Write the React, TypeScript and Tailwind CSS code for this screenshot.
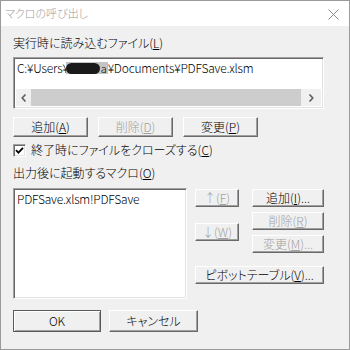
import * as React from "react";

const font = "font-['Noto_Sans_CJK_JP',sans-serif] [font-feature-settings:'palt'] font-light";

function U({ children }: { children: React.ReactNode }) {
  return <span className="underline underline-offset-[1px]">{children}</span>;
}

function Btn({
  children,
  w,
  h = "h-[18px]",
  disabled,
  isDefault,
  className = "",
}: {
  children: React.ReactNode;
  w: string;
  h?: string;
  disabled?: boolean;
  isDefault?: boolean;
  className?: string;
}) {
  const edge = isDefault
    ? "border border-[#5a5a5a] shadow-[inset_1px_1px_0_#ffffff,inset_-1px_-1px_0_#a0a0a0]"
    : "border border-t-white border-l-white border-r-[#696969] border-b-[#696969] shadow-[inset_-1px_-1px_0_#a0a0a0]";
  return (
    <div
      className={`${w} ${h} ${edge} bg-[#f0f0f0] flex items-center justify-center text-[12px] leading-none ${
        disabled ? "text-[#a0a0a0]" : "text-black"
      } ${className}`}
    >
      {children}
    </div>
  );
}

function Sunken({ className = "", children }: { className?: string; children?: React.ReactNode }) {
  return (
    <div
      className={`bg-white border border-t-[#a0a0a0] border-l-[#a0a0a0] border-r-white border-b-white shadow-[inset_1px_1px_0_#696969,inset_-1px_-1px_0_#e3e3e3] ${className}`}
    >
      {children}
    </div>
  );
}

export default function App() {
  return (
    <div className={`w-[350px] h-[350px] bg-[#f0f0f0] border border-[#9a9a9a] flex flex-col ${font}`}>
      {/* title bar */}
      <div className="h-[25px] bg-white flex items-center justify-between pl-[4px] pr-[10px]">
        <span className="text-[11px] text-[#9c9c9c]">マクロの呼び出し</span>
        <svg width="11" height="11" viewBox="0 0 11 11" className="mt-[1px]">
          <path d="M0.5 0.5 L10.5 10.5 M10.5 0.5 L0.5 10.5" stroke="#8a8a8a" strokeWidth="1" />
        </svg>
      </div>

      <div className="pl-[12px] flex flex-col text-[12px] text-black">
        <div className="mt-[10px] h-[14px] leading-[14px]">
          実行時に読み込むファイル(<U>L</U>)
        </div>

        {/* file list */}
        <Sunken className="mt-[7px] w-[311px] h-[52px] flex flex-col justify-between p-[2px]">
          <div className="pl-[1px] pt-[2px] h-[14px] leading-[14px] flex items-center whitespace-nowrap tracking-[-0.2px]">
            <span>C:¥Users¥</span>
            <span className="inline-flex items-center h-[12px] w-[42px] bg-[#c4c4c4] -ml-[3px]">
              <span className="h-[11px] w-[34px] rounded-full bg-[#1a1a1a]" />
              <span className="ml-auto pr-[1px] text-[11px]">a</span>
            </span>
            <span>¥Documents¥PDFSave.xlsm</span>
          </div>
          <div className="h-[17px] flex bg-[#f0f0f0]">
            <div className="w-[15px] flex items-center justify-center">
              <svg width="6" height="8" viewBox="0 0 6 8">
                <path d="M4.5 0.5 L1.2 4 L4.5 7.5" stroke="#606060" strokeWidth="1.6" fill="none" />
              </svg>
            </div>
            <div className="flex-1 bg-[#cdcdcd]" />
            <div className="w-[20px] flex items-center justify-center">
              <svg width="6" height="8" viewBox="0 0 6 8">
                <path d="M1.5 0.5 L4.8 4 L1.5 7.5" stroke="#606060" strokeWidth="1.6" fill="none" />
              </svg>
            </div>
          </div>
        </Sunken>

        {/* file buttons */}
        <div className="mt-[8px] flex gap-[10px]">
          <Btn w="w-[75px]" h="h-[20px]">追加(<U>A</U>)</Btn>
          <Btn w="w-[75px]" h="h-[20px]" disabled>削除(<U>D</U>)</Btn>
          <Btn w="w-[75px]" h="h-[20px]">変更(<U>P</U>)</Btn>
        </div>

        {/* checkbox */}
        <div className="mt-[6px] h-[14px] flex items-center">
          <Sunken className="w-[13px] h-[13px] flex items-center justify-center">
            <svg width="9" height="9" viewBox="0 0 9 9">
              <path d="M1 4.2 L3.4 6.6 L8 1.8" stroke="#000" strokeWidth="1.8" fill="none" />
            </svg>
          </Sunken>
          <span className="ml-[5px] leading-[14px]">
            終了時にファイルをクローズする(<U>C</U>)
          </span>
        </div>

        <div className="mt-[9px] h-[14px] leading-[14px]">
          出力後に起動するマクロ(<U>O</U>)
        </div>

        {/* macro list + buttons */}
        <div className="mt-[8px] flex">
          <Sunken className="w-[174px] h-[111px] p-[2px]">
            <div className="pl-[1px] pt-[1px] h-[14px] leading-[14px] whitespace-nowrap tracking-[-0.2px]">
              PDFSave.xlsm!PDFSave
            </div>
          </Sunken>

          <div className="ml-[8px] mt-[1px] flex flex-col">
            <div className="flex">
              <div className="flex flex-col">
                <Btn w="w-[44px]" disabled>↑(<U>F</U>)</Btn>
                <Btn w="w-[44px]" disabled className="mt-[16px]">↓(<U>W</U>)</Btn>
              </div>
              <div className="ml-[13px] flex flex-col gap-[5px]">
                <Btn w="w-[72px]">追加(<U>I</U>)...</Btn>
                <Btn w="w-[72px]" disabled>削除(<U>R</U>)</Btn>
                <Btn w="w-[72px]" disabled>変更(<U>M</U>)...</Btn>
              </div>
            </div>
            <Btn w="w-[129px]" className="mt-[13px]">ピボットテーブル(<U>V</U>)...</Btn>
          </div>
        </div>

        {/* OK / cancel */}
        <div className="mt-[11px] flex gap-[8px]">
          <Btn w="w-[88px]" h="h-[22px]" isDefault>OK</Btn>
          <Btn w="w-[89px]" h="h-[22px]">キャンセル</Btn>
        </div>
      </div>
    </div>
  );
}
